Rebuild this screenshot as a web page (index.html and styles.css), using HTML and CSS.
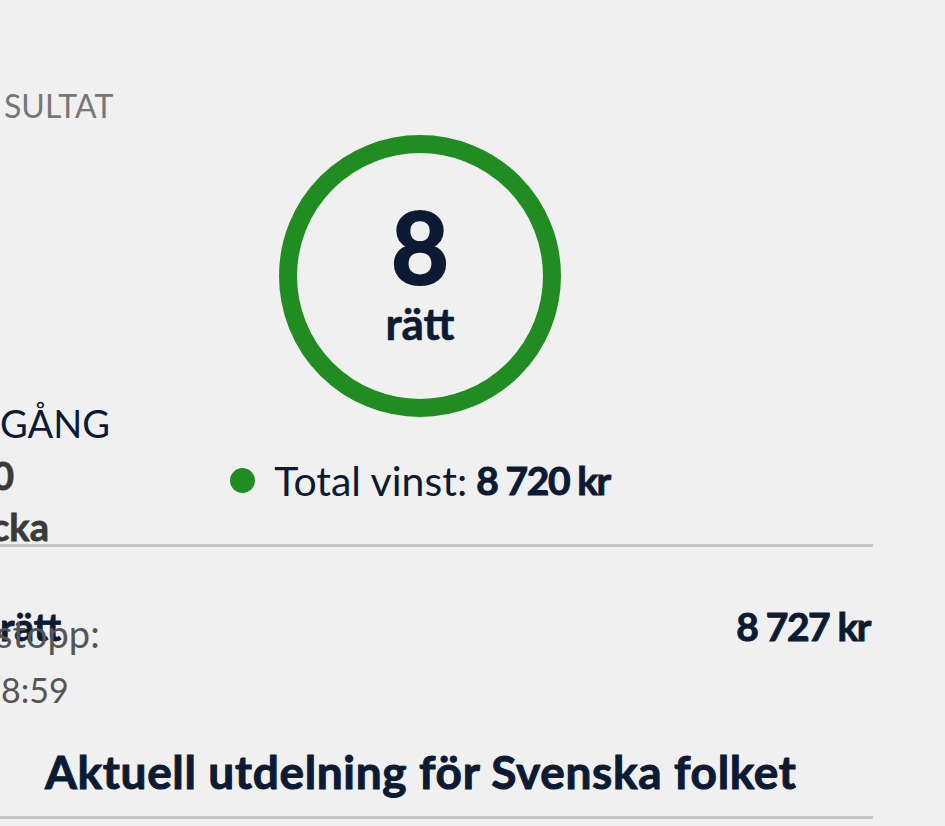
FILE: index.html
```html
<!DOCTYPE html>
<html lang="sv">
<head>
    <meta charset="UTF-8">
    <meta name="viewport" content="width=device-width, initial-scale=1.0">
    <title>Resultat</title>
    <link rel="stylesheet" href="styles.css">
</head>
<body>
    <div class="page">
        <main class="main">
            <section class="result">
                <div class="ring">
                    <span class="ring-num">8</span>
                    <span class="ring-unit">rätt</span>
                </div>
                <p class="total"><span class="dot"></span>Total vinst: <strong>8 720 kr</strong></p>
            </section>

            <section class="payout">
                <div class="win-row">
                    <span>rätt</span>
                    <span class="win-amount">8 727 kr</span>
                </div>
                <h2 class="payout-title">Aktuell utdelning för Svenska folket</h2>
            </section>
        </main>

        <aside class="side">
            <p class="side-title">SULTAT</p>
            <p class="side-label">GÅNG</p>
            <p class="side-value">0</p>
            <p class="side-value side-week">cka</p>
            <p class="side-muted side-stop">stopp:</p>
            <p class="side-muted side-time">8:59</p>
        </aside>
    </div>
</body>
</html>
```

FILE: styles.css
```css
body {
    margin: 0;
    background-color: #f0f0f0;
    font-family: Lato, "Liberation Sans", sans-serif;
    color: #0c1b33;
    overflow: hidden;
}

p, h2 {
    margin: 0;
}

.page {
    display: grid;
    width: 945px;
    height: 826px;
    overflow: hidden;
}

.main, .side {
    grid-area: 1 / 1;
}

/* main column, its left edge sits outside the window */
.main {
    margin-left: -33px;
    width: 906px;
}

.result {
    display: flex;
    flex-direction: column;
    align-items: center;
    padding: 135px 0 43px;
    border-bottom: 3px solid #c4c4c4;
}

.ring {
    box-sizing: border-box;
    width: 282px;
    height: 282px;
    border: 18px solid #218c21;
    border-radius: 50%;
    display: flex;
    flex-direction: column;
    align-items: center;
    justify-content: center;
    gap: 6px;
    padding-bottom: 12px;
    font-weight: 700;
    line-height: 1;
}

.ring-num {
    font-size: 100px;
    -webkit-text-stroke: 2px currentColor;
}

.ring-unit {
    font-size: 44px;
    -webkit-text-stroke: 0.6px currentColor;
}

.total {
    display: flex;
    align-items: center;
    margin-top: 43px;
    font-size: 41px;
    line-height: 1;
}

.total strong {
    font-weight: 700;
    margin-left: 9px;
    font-size: 39px;
    letter-spacing: -1.4px;
    -webkit-text-stroke: 1px currentColor;
}

.dot {
    width: 25px;
    height: 25px;
    border-radius: 50%;
    background-color: #218c21;
    margin-right: 19px;
}

.payout {
    padding: 60px 3px 21px 33px;
    border-bottom: 3px solid #c4c4c4;
}

.win-row {
    display: flex;
    justify-content: space-between;
    font-size: 39px;
    font-weight: 700;
    line-height: 1;
    -webkit-text-stroke: 0.8px currentColor;
}

.win-amount {
    letter-spacing: -1.4px;
    -webkit-text-stroke: 1px currentColor;
}

.payout-title {
    margin-top: 103px;
    padding-left: 45px;
    font-size: 46px;
    font-weight: 700;
    line-height: 1;
    letter-spacing: 0.65px;
    -webkit-text-stroke: 1px currentColor;
}

/* left column */
.side {
    display: flex;
    flex-direction: column;
    align-items: flex-start;
    padding-left: 4px;
    font-size: 38px;
    line-height: 1;
}

.side-title {
    margin-top: 90px;
    font-size: 32px;
    color: #777;
}

.side-label {
    margin-top: 282px;
    margin-left: -4px;
}

.side-value {
    margin-top: 14px;
    margin-left: -12px;
    font-weight: 700;
    color: #3a3a3a;
    -webkit-text-stroke: 0.8px currentColor;
}

.side-week {
    margin-top: 13px;
    margin-left: -13px;
}

.side-muted {
    color: #555;
}

.side-stop {
    margin-top: 69px;
    margin-left: -8px;
}

.side-time {
    margin-top: 21px;
    margin-left: -3px;
    font-size: 34px;
}
```
